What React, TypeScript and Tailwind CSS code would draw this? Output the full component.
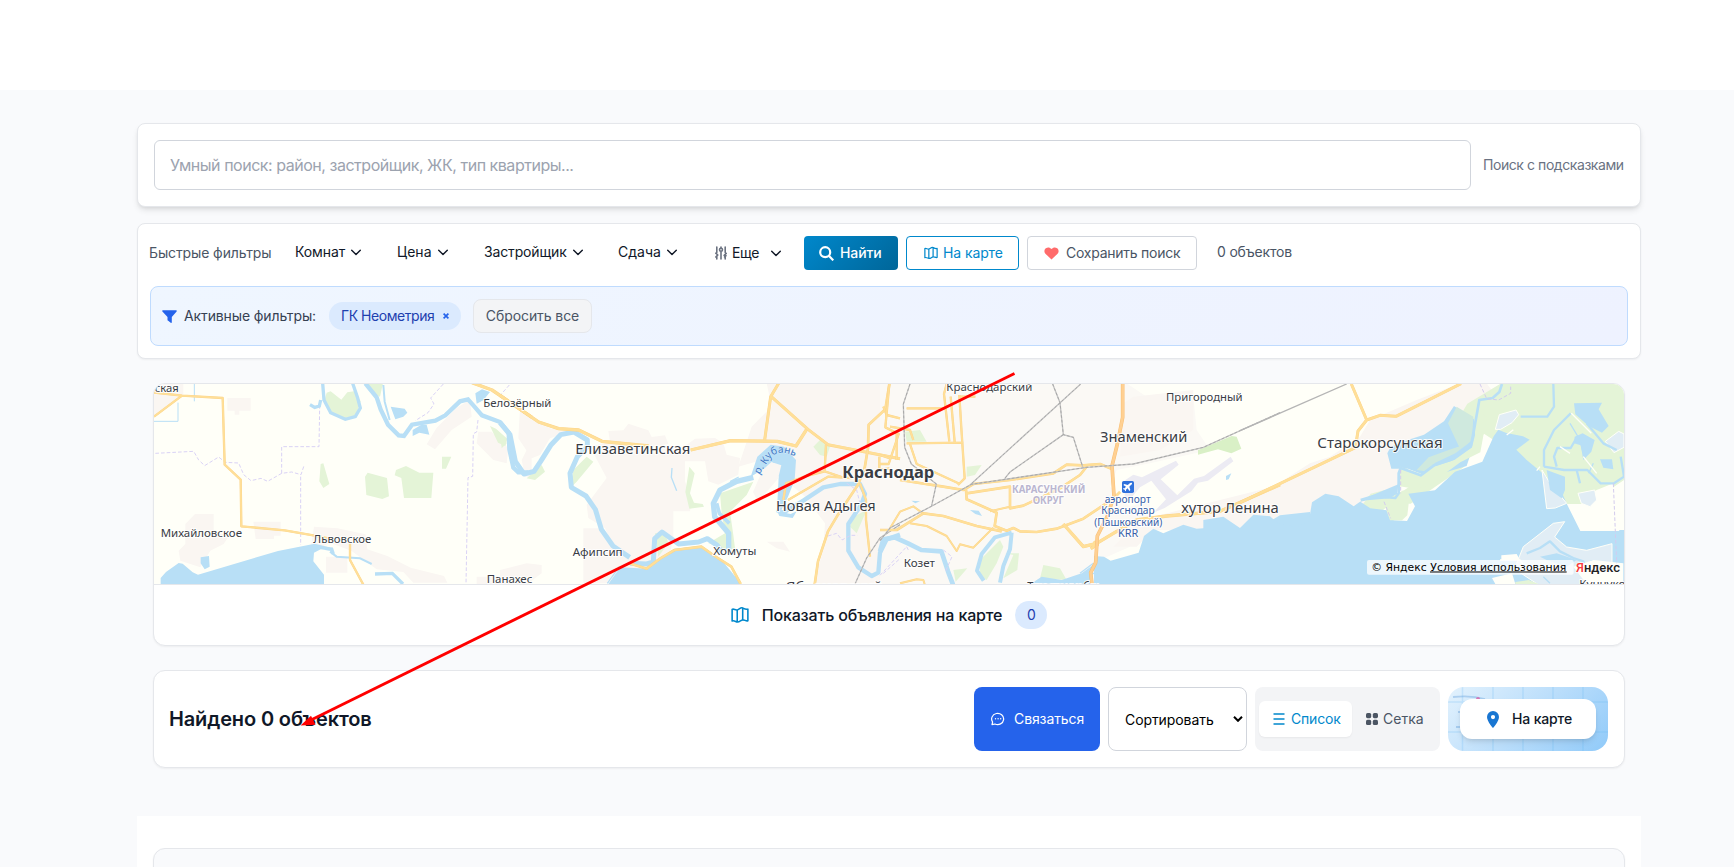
import React from "react";

const WATER = "#b8dff6";
const ROAD = "#ffdf98";
const ROAD_EDGE = "#fbd48a";
const GREEN = "#e4f4d7";
const URBAN = "#faf6f2";

function MapIcon({ className }: { className: string }) {
  return (
    <svg className={className} viewBox="0 0 24 24" fill="none" stroke="currentColor" strokeWidth="2.1" strokeLinejoin="round" strokeLinecap="round">
      <path d="M1.500 4.500C3.500 3.200 5.800 5.800 8.300 5.200 10.800 4.600 13 1.200 15.600 2.600c2.200 1.200 4.200 2.400 6.900 1.600v15.500c-2.400.9-4.600-1.500-6.900-1.200-2.600.4-4.600 3.500-7.300 2.800-2.200-.5-4.300-2.400-6.800-1.300zM8.300 5.300V21M15.600 2.800v15.500" />
    </svg>
  );
}

function Chevron() {
  return (
    <svg className="h-[10px] w-[10px] shrink-0" viewBox="0 0 10 10" fill="none" stroke="#111827" strokeWidth="1.4" strokeLinecap="round" strokeLinejoin="round">
      <path d="M.7 3.200 5 7.600 9.300 3.200" />
    </svg>
  );
}

function SlidersIcon() {
  return (
    <svg className="h-[14px] w-[12px] shrink-0" viewBox="0 0 12 14" fill="none" stroke="#6b7280" strokeWidth="1.600" strokeLinecap="round">
      <path d="M1.800 1v5.500M1.800 10v3M6 1v1M6 6v7M10.200 1v5.500M10.200 10v3M.8 7.200l2 1.800M.8 11l1.600-1.600M9.200 9.400l2-2M9.600 11l1.400-1.300" />
      <circle cx="6" cy="3.800" r="1.500" />
    </svg>
  );
}

function SearchIcon() {
  return (
    <svg className="h-[15px] w-[15px] shrink-0" viewBox="0 0 15 15" fill="none" stroke="white" strokeWidth="2.200">
      <circle cx="6.200" cy="6.200" r="5" />
      <path d="m9.800 9.800 4.500 4.500" />
    </svg>
  );
}

function HeartIcon() {
  return (
    <svg className="h-[13px] w-[15px] shrink-0" viewBox="0 0 15 13" fill="#ff6b6b">
      <path d="M7.500 12.500 1.400 6.700C-.2 5.100.2 2.400 1.900 1.200 3.700 0 6 .3 7.500 2.100 9 .3 11.300 0 13.100 1.200c1.700 1.200 2.100 3.900.5 5.500z" />
    </svg>
  );
}

function FunnelIcon() {
  return (
    <svg className="h-[13px] w-[15px] shrink-0" viewBox="0 0 15 13" fill="#2563eb">
      <path d="M.8.3h13.400c.6 0 .8.700.4 1.100L9.800 7v5.200c0 .6-.6.9-1.100.5L5.900 10.600a.9.9 0 0 1-.4-.7V7L.4 1.400C0 1 .200.3.8.3z" />
    </svg>
  );
}

function ChatIcon() {
  return (
    <svg className="h-[14px] w-[14px] shrink-0" viewBox="0 0 14 14" fill="none" stroke="white" strokeWidth="1.200">
      <path d="M1 12.600l.6-2.600A6 5.600 0 1 1 4 12z" strokeLinejoin="round" />
      <g fill="white" stroke="none">
        <circle cx="4.500" cy="6.700" r=".7" />
        <circle cx="7.100" cy="6.700" r=".7" />
        <circle cx="9.700" cy="6.700" r=".7" />
      </g>
    </svg>
  );
}

function Filter({ label, width, text }: { label: string; width: string; text: string }) {
  return (
    <div className={`flex shrink-0 items-center pb-0.5 ${width}`}>
      <span className={`mr-[6px] text-gray-900 ${text}`}>{label}</span>
      <Chevron />
    </div>
  );
}

function Label({ x, y, w, size, bold, fill = "#3a3d44", children }: { x: number; y: number; w: number; size: number; bold?: boolean; fill?: string; children: string }) {
  return (
    <text x={x} y={y} textLength={w} lengthAdjust="spacingAndGlyphs" fontSize={size} fontWeight={bold ? 700 : 400} fill={fill} stroke="#ffffff" strokeOpacity="0.9" strokeWidth={6} strokeLinejoin="round" paintOrder="stroke">
      {children}
    </text>
  );
}

function Road({ d, w = 8 }: { d: string; w?: number }) {
  return (
    <>
      <path d={d} fill="none" stroke={ROAD_EDGE} strokeWidth={w} strokeLinejoin="round" />
      <path d={d} fill="none" stroke={ROAD} strokeWidth={w - 2} strokeLinejoin="round" />
    </>
  );
}

function Rail({ d }: { d: string }) {
  return (
    <>
      <path d={d} fill="none" stroke="#c4c4c4" strokeWidth="4" />
      <path d={d} fill="none" stroke="#a2a2a2" strokeWidth="2.500" strokeDasharray="8 6" />
    </>
  );
}

function CityMap() {
  return (
    <svg className="block h-[200px] w-full" viewBox="154 384 1470 200" preserveAspectRatio="none" fontFamily="'Noto Sans', sans-serif">
      <rect x="154" y="384" width="1470" height="200" fill="#fffff8" />

      {/* urban areas */}
      <g fill={URBAN}>
        <g transform="translate(130 370) scale(.333333)">
          <path d="M70 40h90v38l-60 40-30 20zM292 84h70v38h-34v12h-14v-12h-22zM195 432h56v60l50 0-20 30-40 20-30 50-60-20-5-30 20-20v-60zM370 455h82v42h-20v10h-55zM552 470l70 5 85 18 5 45 60 20 70 35 100 25 10 20H850l-30-32-80-8-75-55-65-25-60 30zM588 560h64v48h-64zM1020 90l5 50-60 40-50 58-25-15 30-50 60-60zM1045 185l40 0 50 50-5 45-40-10-50-50zM1175 270l30-60v110h-20zM1040 620h160v25h-160z" />
        </g>
        <g transform="translate(500 370) scale(.333333)">
          <path d="M60 115l90 60 60 10-60 20-30 50-25 10-40-60zM270 230l60-15-5-32 45-2 15-20 60 20 10 20 40-5 10 25-70 15 110 0 40-30 60-2 25 15 10 35 40 10-5 50-60 30-30-10-10-60h-60v60l20 60-5 30-50 0v80l-20 90-70 60-65-50-30-80-20-50-50-30-5-40 60-80zM250 475h50l80 100-55 65h-75zM0 600l80-20 45 5v25l-40 30H0z" />
          <path d="M800 40h400v600H940l30-100 5-80-60-80-70-60-60-50-70 20 40-120 60-60zM800 515l50 0 20 30-40-10z" />
        </g>
        <g transform="translate(880 370) scale(.333333)">
          <path fill="#fbf9f5" d="M0 40h740l60 40 140 0 10 100 40 60-180 40-100 20-20 50 60 60 60-20 0 80-60 60-90 40-20 85H0z" />
          <path d="M730 100l30-20 180-20v120l-100 60-120 20zM780 450l400-100h30v150l-80-50-80 50-60-10-70-10-100 0-50 50-70 0z" />
        </g>
        <g transform="translate(1240 370) scale(.333333)">
          <path d="M-90 440L100 350l110-70 60-20 90-60 30-50 140-60 130-50h80l30 40-60 30-20 80-70 0-130 60-5 100-110 60-70 40-110 20-40 80-80-30L0 470z" />
        </g>
      </g>

      {/* woods and fields */}
      <g transform="translate(130 370) scale(.333333)" fill={GREEN}>
        <path d="M590 68l12-4 32 25 18-22 20-3 20 30-15 45-35 6-45-20-15-30zM700 35h60l-10 45-20-10zM572 282l8-2 18 62-18 12-12-20zM705 320l8-12 58 16 6 55-20 8-48-12zM798 300l30-12 40 20 42 0-6 76h-82l-8-60-20-8zM936 260l28 0-16 36h-12zM1080 168l18 8 34 30-6 22-22-10z" />
      </g>
      <g transform="translate(500 370) scale(.333333)" fill={GREEN}>
        <path d="M0 190l20 30-15 15zM220 300l40-40 20 15-50 60-20 20zM80 325l45-40 10 20-30 25zM568 290l16 20-14 60 12 28 26 4 4 8-44 6-12-50zM660 370l100-35-20 40-50 50 10 70 5 40-20 5-60-20 50-30-10-60zM465 490l30 0 10 30-30 40zM940 230l20-20 30 20-10 30-20-5zM1060 440l40-20-30 70-20-20z" />
      </g>
      <g transform="translate(880 370) scale(.333333)" fill={GREEN}>
        <path d="M75 185l45-5 20 35h-60zM260 290l45-5-20 30-25 5zM300 570l60-60 10 20-20 50-30 50-20-10zM375 550l42 0-5 50-42 25 30-70zM490 585l50 10 20 35-80-5zM220 600l42-5-35 40z" />
        <path fill="#d9f0c6" d="M955 240l100-42 15 2 14 36-30 14-40-12-60 16v-14z" />
      </g>

      {/* west lowlands */}
      <g transform="translate(130 370) scale(.333333)">
        <g fill="none" stroke="#d9d2f5" strokeWidth="3" strokeDasharray="11 6">
          <path d="M76 250l115-6 15 26 18 17 42-26 20 16 40 2 15 35 22 18 30-7 20 9 42-24 30-4 28 8 10-30M455 310v-80h112l2-120M512 320v205M940 42l-38 42 10 18-18 26-38 24M1138 45l-30 34M1044 150l-4 36-10 5-2 128-14 4-6 318" />
        </g>
        <path fill={WATER} d="M92 642v-18l16-18 38-27 12 2 30 26 16 7 240-71 110-22 44 11 6 10-32-4-20 10-2 26 32 40v28zM212 562l25-4 2 32-15 8-12-18zM782 110l42 6 8 12-12 12-24 8zM848 180l26-16 16 0 8 30-30-6-20 10zM1036 70l20-12 24 8-20 25-20 10z" />
        <g fill="none" stroke={WATER}>
          <path strokeWidth="10" d="M578 40l4 50 20 38 44 20 30-8 15-26-8-30-15-44M572 90l-4 18-14 4-14-8" />
          <path strokeWidth="13" d="M706 40l34 42 12 36 22 46 32 32 16 2 24-34 70-12 30-16 44-42 24-6 16 18 26 30 54 20 26 32 2 50 12 55 15 14 30 0" />
          <path strokeWidth="6" d="M760 45l4 50 15 55M600 545l20 15 70 5 35 17" />
          <path strokeWidth="10" d="M735 612l52-2 32 32M585 535l20 2 5 15" />
          <path strokeWidth="3" d="M193 42v52M144 98v56H72" />
        </g>
        <Road w={7} d="M72 68l84 9 122 7 6 200 48 45 2 140 130 12 90 16 60 12M72 140l84-63M660 520v50l40 74" />
        <Road w={10} d="M1026 38l60 22 120 82" />
        <Label x={74} y={65} w={72} size={32}>ская</Label>
        <Label x={92} y={500} w={244} size={34}>Михайловское</Label>
        <Label x={550} y={519} w={174} size={34}>Львовское</Label>
      </g>

      {/* Kuban river bends */}
      <g transform="translate(500 370) scale(.333333)">
        <path fill={WATER} d="M325 642l36-50 82 4 80-60 80-8 60 40 58 70v8z" />
        <path fill={WATER} d="M752 320l20-60 40-36 40 6 36 40-4 60-20 50-22 44-10-24 4-80-10-20-30-6z" />
        <path fill={URBAN} d="M788 300l26-24 30 10-10 40-60 70-15-30z" />
        <path fill={WATER} d="M810 264l26 2 4 6-20 6zM832 424l40 8 18-8-12 20-40-6z" />
        <g fill="none" stroke={WATER} strokeLinejoin="round">
          <path strokeWidth="15" d="M0 158l30 36 16 80 26 38 30-8 20-30 30-48 30-32 40-8 40 24 0 20-30 30-22 50 4 42 44 26 28 40 18 60 35 50 50 34" />
          <path strokeWidth="15" d="M390 580l50 2 20-6 4-70 22-20 50 36 60-6 26-10 30 20 14 20" />
          <path strokeWidth="16" d="M760 322l-50 12-50 26-20 40 4 40 42 50 0 60" />
          <path strokeWidth="11" d="M650 400l8 30 30 30" />
          <path strokeWidth="13" d="M830 420l20 8 60-36 60-40 50-10 60 0 15 30-10 30-40 60 0 80 30 50 40 26 20-10 5-60 20-40 40-14" />
          <path strokeWidth="4" d="M516 294l-2 28 16 40M322 640l36-50M690 335l26-14" />
        </g>
        <Road w={10} d="M0 76l20 14 96 66 60 20 60 4 70 34 140 14M572 240l120-28 140 2 56 14 32-50" />
        <Road w={9} d="M836 40l-24 40-18 130M814 80l110 98 60 46 216 42" />
        <Road w={8} d="M388 580l52 16 40-30 44-26 80-10 40 28 50 32 28 52M1168 42l-12 76-50 46-2 70-10 60-20 50-60 90-30 50-30 90-10 70" />
        <Road w={7} d="M850 390l8-50 60-22 60-15M864 390l120-70 70 4M978 224l-4 80 60 20M1138 260l0 40 30-5M1080 340l18 50 0 60 12 110M1150 110l10 25 40 10M1190 190v80" />
        <Rail d="M1200 464l-60 40-40 60-35 78" />
        <path d="M984 498l26-8 16 20 26-14 20 0M1040 340l30 20 10 40M1150 610l50-44" fill="none" stroke="#d9d2f5" strokeWidth="3" strokeDasharray="11 6" />
        <path id="river" d="M778 314L808 268Q832 234 888 260" fill="none" />
        <text fontSize="31" fill="#3f78c6" textLength="140" lengthAdjust="spacingAndGlyphs" stroke="#dff1fb" strokeWidth="2" paintOrder="stroke">
          <textPath href="#river">р. Кубань</textPath>
        </text>
        <Label x={-50} y={112} w={204} size={34}>Белозёрный</Label>
        <Label x={226} y={253} w={345} size={43}>Елизаветинская</Label>
        <Label x={218} y={558} w={150} size={34}>Афипсип</Label>
        <Label x={-40} y={639} w={137} size={34}>Панахес</Label>
        <Label x={640} y={555} w={129} size={34}>Хомуты</Label>
        <Label x={858} y={662} w={290} size={40}>Яблоновский</Label>
      </g>

      {/* city centre and airport */}
      <g transform="translate(880 370) scale(.333333)">
        <path fill="#ecebf3" d="M736 330l24-16 26 8 102-50 8 12-54 44 50 48 50-50 30-8 80-58 8 14-76 58-30 6-20 26-80 50-34 14 38-40-44-56-34 20-30 36-16-8z" />
        <path fill={WATER} d="M642 558l30 2 20 12 84-24 16-50 28-22 30 14 60-26 40 12 60-4 40 26 60-8 50-30 40-24 90-10v220H642zM455 640l30-20 60 10 60-20 35-26-10 58zM1038 318l16-8-8 18-8 2zM94 392l26 2-14 6zM270 420l26 2 10 16-20-6z" />
        <g fill="none" stroke={WATER} strokeLinejoin="round">
          <path strokeWidth="14" d="M0 544l10-36 34-6 40 18 40 20 60 4 20 60 15 40" />
          <path strokeWidth="12" d="M395 488l-50 14-40 50-14 50 20 30M395 488l-5 50-20 50-10 50" />
          <path strokeWidth="4" d="M590 632l70-30M600 610l40-30" />
        </g>
        <Road w={7} d="M28 42l-12 130 40 20-30 90-26 0M80 115h120M80 220l170-2M90 222l20 60 130 60M200 42l-8 30 16 142M212 80l12 136M238 75l6 100 10 150-20 20M236 80h50M0 255l30 10M100 210l-10-30-60-10" />
        <Road w={8} d="M60 330l130 20 60 10 30-18 110-12 130-20 40-26 50 2 50-4 34 14M258 358l2 30 90 40-6 40 36 14 20-8 20 10 50 2 60-10 80-30 90-60 20-20M260 370l130-20 0 65 40-8 110-52 60-40 24-30M0 480h50l80-50 60 8 100 30 75 16" />
        <Road w={6} d="M30 475l30-50 40-16 30 22M90 460l50 8 60 30 30 45 10-20 40 10 60-60M390 410l-60 14M60 640l50-12 20 2 4 12" />
        <Road w={10} d="M550 462l60 68 40-10 60-36M700 490l70-40 90-12 160-14 180-80M632 536l20-12-12-8" />
        <g fill="none" strokeLinejoin="round">
          <path stroke="#f8bf74" strokeWidth="11" d="M728 42v100l-16 80-16 66 6 90-20 60-30 60-5 80-15 30 4 35" />
          <path stroke="#ffd092" strokeWidth="8" d="M728 42v100l-16 80-16 66 6 90-20 60-30 60-5 80-15 30 4 35" />
        </g>
        <Rail d="M0 512l30-38 126-66 118-65 346-51 140-10 210-50 230-104M90 42l-20 60 4 130 20 50 75 60-14 65M602 42L270 345M518 42l22 56 10 96 30 8 22 70 6 18M550 194l-160 112-16 20" />
        <path d="M0 616l80-86M80 530l6 12M190 540l26 20-20 45" fill="none" stroke="#d9d2f5" strokeWidth="3" strokeDasharray="11 6" />
        <Label x={199} y={62} w={258} size={34}>Краснодарский</Label>
        <Label x={858} y={94} w={230} size={34}>Пригородный</Label>
        <Label x={660} y={217} w={262} size={43}>Знаменский</Label>
        <Label x={-113} y={325} w={276} size={47} bold>Краснодар</Label>
        <Label x={-312} y={424} w={299} size={43}>Новая Адыгея</Label>
        <Label x={904} y={430} w={292} size={43}>хутор Ленина</Label>
        <Label x={71} y={592} w={94} size={34}>Козет</Label>
        <Label x={396} y={368} w={220} size={30} bold fill="#bab6d0">КАРАСУНСКИЙ</Label>
        <Label x={458} y={401} w={94} size={30} bold fill="#bab6d0">ОКРУГ</Label>
        <Label x={674} y={399} w={138} size={31} fill="#3760a8">аэропорт</Label>
        <Label x={664} y={433} w={160} size={31} fill="#3760a8">Краснодар</Label>
        <Label x={643} y={467} w={204} size={31} fill="#3760a8">(Пашковский)</Label>
        <Label x={714} y={502} w={61} size={31} fill="#3760a8">KRR</Label>
        <Label x={442} y={664} w={225} size={36}>Тлюстенхабль</Label>
        <rect x="726" y="333" width="36" height="36" rx="5" fill="#2f71dc" />
        <path fill="white" d="M756 339c-3-2-6 0-9 3l-4 3-10-3-3 3 8 5-4 5-4 0-1 2 5 2 2 5 2-1 0-4 5-4 5 8 3-3-3-10 4-4c3-2 5-5 4-7z" />
      </g>

      {/* reservoir */}
      <g transform="translate(1240 370) scale(.333333)">
        <path fill={GREEN} d="M780 42h372v290l-30 20-60 20-20 30-80 0-60-80-30-40-10 14-30-5-70-60 0-20-30-20-40 50-20 50-160 110-60 0-60 50-20 50-60-10-50-10-10-10 50-20 10-30 50-10 30-40 40-10 30 20 90-60 50-60 20-60 60-100z" />
        <path fill="#fffff8" d="M1152 260v70l-30 20 0 292h30zM1070 360l50-20v110l-60-40-20-30z" />
        <path fill={WATER} d="M-110 640V450l60-10L0 474l40-40 50 5 25 22 55 10 36-14 10-60 40-26 40 8 45 30 34-24 100-42-4 30-20 12-70 6-20 4 30 20 50 6 20 30 40 2 24-44-20-38 80-10 60-56 82-30 34-76 14-20 24 10 50 10 20 10-40 30 30 30 60 50 10 30 30 4 22 50 40 80 130 0 70 60v220zM442 250l10-20 40-16 60-20 60-40 30-46 30 20 30 20 4 60-26 80-60 18-50 8-26-2-40-16-50 0zM1002 100l84-2-10 20 30 50-20 20-40-20-40-35z" />
        <path fill={GREEN} d="M430 395l60-34 16 40-4 35-16 15-36 0zM480 290l66 22 30-20 60-20 60-40 25-100 20 5-20 110-60 30-90 66-40 15-55-10z" />
        <path fill="#cfe9de" d="M624 160l26-50 50 30-4 72-36 24zM530 300l36-38 60-22 60-20-40 30-60 28-30 26z" />
        <path fill="#e1edf5" stroke="#fffff8" strokeWidth="3" d="M766 178l12-44 50-14 8 14-20 24-34 20zM1096 214l40-30 16 8v40l-30 16zM906 300l24 40 50 60-34 14-26 2zM1014 370l50-10 6 30-20 20-26-10zM830 580l20-50 90-70 34-5-30 46 36 30 60 10 76-20v60l-40 20-20 44-160 0-60-40z" />
        <path fill={WATER} d="M920 300l55 20 0 40-10 25-35-25zM1004 200l24-10 36 20-10 35-24 25-8-44-20-6zM1080 268l36 0 4 30-30-5zM1138 480l16 0v20h-20zM1130 505h24v18h-24zM1126 530h26v22h-26zM900 560l50-10 60 20-30 20-60-20z" />
        <g fill="none" stroke={WATER} strokeLinejoin="round">
          <path strokeWidth="8" d="M362 390l40-12 64 6 10-14 0-60 6-16 60 22 40-30 60-20 50-36 10-50 16-90 40-6 20-18 8-24" />
          <path strokeWidth="7" d="M842 140l80 0 20-30-2-68M912 290l0-50 30-60 50-50M950 290l-8-30 10-26 40 0 20-34M912 290l60 10 70 0 40 40 40 0 30-20-10-60M1010 300l10 40M1040 160l50 60 40 20M860 550l40-16 30-20 30 30 40 20 30 10 10 30 20 0-5-30 30 12 50 30" />
          <path strokeWidth="4" d="M990 160l30 50M1020 210l10 40M1060 280l-14 30M910 620l20 20" />
        </g>
        <path fill="#fffff8" d="M756 624l60-14 10 32h-60zM1000 590l60-20 90 10v62h-110zM784 556l46-4 10 18h-56z" />
        <path fill={GREEN} d="M826 636l40-6 30 12h-70z" />
        <g fill="none" stroke="#fffff8" strokeWidth="4">
          <path d="M800 195l20-16M900 290l-10 12M1030 260l40 50M960 230l30 20M994 130l60 60M780 570l60 0 20 30" />
        </g>
        <path d="M720 42l20 44 36 4 36-20 0-20M482 300v70M432 395l20 50M1120 340l10 240" fill="none" stroke="#d3cbed" strokeWidth="3" strokeDasharray="11 6" />
        <Road w={9} d="M0 398l346-165 8-50 26-33 40-14 48 3 195-98M334 42l46 108" />
        <path d="M0 182L320 42" stroke="#b5b5b5" strokeWidth="4" />
        <Label x={232} y={233} w={376} size={43}>Старокорсунская</Label>
        <Label x={1018} y={655} w={235} size={34}>Кунчукохабль</Label>
        <rect x="381" y="570" width="620" height="44" rx="6" fill="white" fillOpacity=".75" />
        <g fontFamily="'DejaVu Sans', sans-serif" fontSize="30" fill="#000">
          <text x="394" y="602" textLength="166" lengthAdjust="spacingAndGlyphs">© Яндекс</text>
          <text x="571" y="602" textLength="408" lengthAdjust="spacingAndGlyphs">Условия использования</text>
        </g>
        <path d="M570 606h410" stroke="#000" strokeWidth="3" />
        <text x="1008" y="606" fontSize="39" fontWeight="500" textLength="132" lengthAdjust="spacingAndGlyphs" fontFamily="Roboto, sans-serif" fill="#222" stroke="white" strokeWidth="5" strokeOpacity=".8" paintOrder="stroke">
          <tspan fill="#fa3c3c">Я</tspan>ндекс
        </text>
      </g>
    </svg>
  );
}

export default function App() {
  return (
    <div className="relative h-[867px] overflow-hidden bg-[#f9fafc] font-['Inter',sans-serif] text-sm leading-5">
      <header className="h-[90px] bg-white" />

      <main className="ml-[137px] flex w-[1504px] flex-col pt-[33px]">
        <section className="flex h-[84px] items-center gap-3 rounded-lg border border-gray-200 bg-white px-4 shadow-md">
          <input
            className="h-[50px] min-w-0 flex-1 rounded-md border border-gray-300 px-[15px] text-base tracking-[-0.47px] placeholder:text-[#9ca3af]"
            placeholder="Умный поиск: район, застройщик, ЖК, тип квартиры..."
          />
          <span className="w-[141px] whitespace-nowrap tracking-[-0.43px] text-gray-500">Поиск с подсказками</span>
        </section>

        <section className="mt-4 h-[136px] rounded-lg border border-gray-200 bg-white p-3 shadow-xs">
          <div className="-ml-px flex h-[34px] items-center whitespace-nowrap">
            <span className="w-[146px] shrink-0 tracking-[-0.12px] text-gray-600">Быстрые фильтры</span>
            <Filter label="Комнат" width="w-[102px]" text="tracking-[-0.1px]" />
            <Filter label="Цена" width="w-[87px]" text="tracking-[0.05px]" />
            <Filter label="Застройщик" width="w-[134px]" text="tracking-[-0.14px]" />
            <Filter label="Сдача" width="w-[97px]" text="tracking-[0.03px]" />
            <div className="flex w-[89px] shrink-0 items-center">
              <SlidersIcon />
              <span className="ml-[5px] mr-3 tracking-[-0.4px] text-gray-900">Еще</span>
              <Chevron />
            </div>
            <button className="flex h-[34px] w-[94px] shrink-0 items-center gap-[6px] rounded bg-linear-135 from-[#0088cc] to-[#006699] pl-[15px] font-medium tracking-[-0.1px] text-white">
              <SearchIcon />
              Найти
            </button>
            <button className="ml-2 flex h-[34px] w-[113px] shrink-0 items-center gap-[5px] rounded border border-[#0088cc] bg-white pl-[17px] tracking-[-0.1px] text-[#0088cc]">
              <MapIcon className="h-[14px] w-[14px] shrink-0" />
              На карте
            </button>
            <button className="ml-2 flex h-[34px] w-[170px] shrink-0 items-center gap-[7px] rounded border border-gray-300 bg-white pl-4 tracking-[-0.25px] text-gray-600">
              <HeartIcon />
              Сохранить поиск
            </button>
            <span className="ml-5 pb-0.5 tracking-[-0.18px] text-gray-600">0 объектов</span>
          </div>

          <div className="mt-4 flex h-[60px] items-center whitespace-nowrap rounded-lg border border-[#bfdbfe] bg-linear-135 from-[#eff6ff] to-[#eef2ff] pl-[11px]">
            <FunnelIcon />
            <span className="ml-[7px] w-[145px] tracking-[-0.12px] text-gray-700">Активные фильтры:</span>
            <span className="flex h-7 w-[132px] items-center rounded-full bg-[#dbeafe] pl-3 tracking-[-0.45px] text-[#1e40af]">
              ГК Неометрия
              <svg className="ml-[9px] h-[6px] w-[6px]" viewBox="0 0 6 6" stroke="#2563eb" strokeWidth="1.700">
                <path d="m.6.6 4.800 4.800M5.400.6.6 5.400" />
              </svg>
            </span>
            <button className="ml-3 h-[34px] w-[119px] rounded-lg border border-gray-200 bg-gray-100 tracking-[-0.08px] text-gray-600">Сбросить все</button>
          </div>
        </section>

        <section className="mx-4 mt-6 overflow-hidden rounded-xl border border-gray-200 bg-white shadow-xs">
          <CityMap />
          <div className="flex h-[61px] items-center justify-center border-t border-gray-200">
            <MapIcon className="h-[18px] w-[18px] text-[#0088cc]" />
            <span className="ml-[13px] text-base font-medium tracking-[-0.14px] text-gray-900">Показать объявления на карте</span>
            <span className="ml-[13px] flex h-7 w-8 items-center justify-center rounded-full bg-[#dbeafe] text-[#1e40af]">0</span>
          </div>
        </section>

        <section className="mx-4 mt-6 flex h-[98px] items-center whitespace-nowrap rounded-xl border border-gray-200 bg-white px-4 shadow-xs">
          <h2 className="-ml-px flex-1 text-xl font-semibold tracking-[-0.14px] text-gray-900">Найдено 0 объектов</h2>
          <button className="flex h-16 w-[126px] items-center gap-[9px] rounded-lg bg-[#2563eb] pl-[17px] tracking-[-0.1px] text-white">
            <ChatIcon />
            Связаться
          </button>
          <button className="ml-2 flex h-16 w-[139px] items-center justify-between rounded-lg border border-gray-300 bg-white pl-4 pr-[3px] tracking-[-0.08px] text-black">
            <span className="pt-0.5">Сортировать</span>
            <svg className="h-[6px] w-[10px]" viewBox="0 0 10 6" fill="none" stroke="black" strokeWidth="2">
              <path d="m1 .8 4 4 4-4" />
            </svg>
          </button>
          <div className="ml-2 flex h-16 w-[185px] items-center rounded-lg bg-gray-100 pl-1">
            <button className="flex h-9 w-[93px] items-center gap-[6px] rounded-md bg-white pl-[14px] tracking-[-0.2px] text-[#0088cc] shadow-xs">
              <svg className="h-3 w-3" viewBox="0 0 12 12" stroke="currentColor" strokeWidth="1.500">
                <path d="M.5 1h11M.5 6h11M.5 11h11" />
              </svg>
              Список
            </button>
            <button className="ml-[14px] flex items-center gap-[5px] text-gray-600">
              <svg className="h-3 w-3" viewBox="0 0 12 12" fill="#4b5563">
                <rect width="5.200" height="5.200" rx="1.600" />
                <rect x="6.800" width="5.200" height="5.200" rx="1.600" />
                <rect y="6.800" width="5.200" height="5.200" rx="1.600" />
                <rect x="6.800" y="6.800" width="5.200" height="5.200" rx="1.600" />
              </svg>
              Сетка
            </button>
          </div>
          <div className="relative ml-2 flex h-16 w-40 items-center justify-center overflow-hidden rounded-2xl bg-linear-135 from-[#e3f2fd] via-[#bbdefb] to-[#90caf9]">
            <svg className="absolute inset-0 h-16 w-40" viewBox="0 0 160 64" fill="none">
              <path d="M14.500 0v64M45 0v64M75 0v64M105 0v64M135 0v64M0 15h160M0 45h160" stroke="#64b5f6" strokeOpacity=".22" strokeWidth="1.500" />
              <path d="M5 10q18-2 32 2M10 25h12M8 40h14" stroke="#64a0dc" strokeOpacity=".4" strokeWidth="1.800" />
              <circle cx="30" cy="12" r="2" fill="#e0529c" fillOpacity=".7" />
            </svg>
            <button className="relative flex h-10 w-[136px] items-center gap-[13px] rounded-xl bg-white pl-[27px] font-medium tracking-[-0.15px] text-gray-900 shadow-md">
              <svg className="h-[17px] w-3" viewBox="0 0 12 17" fill="#1976d2" fillRule="evenodd">
                <path d="M6 0a6 6 0 0 0-6 6c0 4.500 6 11 6 11s6-6.500 6-11a6 6 0 0 0-6-6zm0 4a2.100 2.100 0 1 1 0 4.200A2.100 2.100 0 0 1 6 4z" />
              </svg>
              На карте
            </button>
          </div>
        </section>

        <section className="mt-12 h-[60px] overflow-hidden bg-white px-4 pt-8">
          <div className="h-40 rounded-xl border border-gray-200 bg-[#f9fafc] shadow-xs" />
        </section>
      </main>

      <svg className="pointer-events-none absolute left-[290px] top-[360px] h-[380px] w-[740px]" viewBox="290 360 740 380">
        <path d="M1014.500 373.500 311 720" stroke="#ff0000" strokeWidth="2.900" />
        <path d="m300.500 725.500 10.500-9.800 4.500 9z" fill="#ff0000" />
      </svg>
    </div>
  );
}
